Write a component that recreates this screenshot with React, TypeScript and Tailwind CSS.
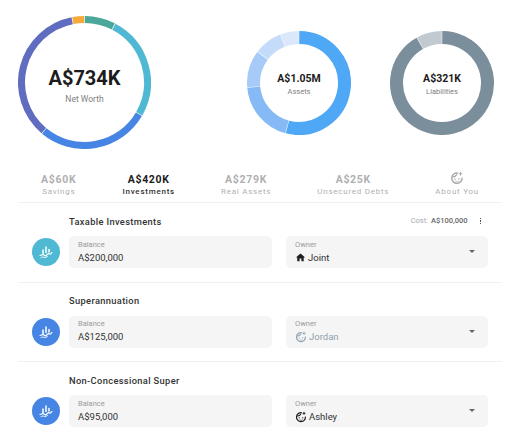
/* Net worth dashboard: rings, category tabs, account rows */
interface Segment {
  from: number;
  to: number;
  color: string;
}

const netWorth: Segment[] = [
  { from: 349, to: 360, color: "#f9a83a" },
  { from: 0, to: 27.5, color: "#4aa79a" },
  { from: 27.5, to: 120, color: "#4fb8d2" },
  { from: 120, to: 220, color: "#4685e4" },
  { from: 220, to: 349, color: "#5f6cc0" },
];

const assets: Segment[] = [
  { from: 0, to: 195, color: "#4fa8f5" },
  { from: 195, to: 265, color: "#85baf7" },
  { from: 265, to: 307, color: "#a7cbf9" },
  { from: 307, to: 339, color: "#c4dbfa" },
  { from: 339, to: 360, color: "#dbe7fb" },
];

const liabilities: Segment[] = [
  { from: 0, to: 331, color: "#7b8e9b" },
  { from: 331, to: 360, color: "#c1cad1" },
];

const tabs = [
  { value: "A$60K", label: "Savings" },
  { value: "A$420K", label: "Investments", active: true },
  { value: "A$279K", label: "Real Assets" },
  { value: "A$25K", label: "Unsecured Debts" },
  { label: "About You" },
];

function arc(cx: number, cy: number, r: number, from: number, to: number) {
  const rad = (a: number) => ((a - 90) * Math.PI) / 180;
  const x1 = cx + r * Math.cos(rad(from));
  const y1 = cy + r * Math.sin(rad(from));
  const x2 = cx + r * Math.cos(rad(to));
  const y2 = cy + r * Math.sin(rad(to));
  return `M${x1} ${y1}A${r} ${r} 0 ${to - from > 180 ? 1 : 0} 1 ${x2} ${y2}`;
}

function Ring({
  size,
  stroke,
  segments,
  children,
}: {
  size: number;
  stroke: number;
  segments: Segment[];
  children: React.ReactNode;
}) {
  const c = size / 2;
  return (
    <div className="relative shrink-0" style={{ width: size, height: size }}>
      <svg width={size} height={size}>
        {segments.map(s => (
          <path
            key={s.from}
            d={arc(c, c, c - stroke / 2, s.from + 0.3, s.to - 0.3)}
            fill="none"
            stroke={s.color}
            strokeWidth={stroke}
          />
        ))}
      </svg>
      <div className="absolute inset-0 flex flex-col items-center justify-center">
        {children}
      </div>
    </div>
  );
}

function ChartIcon() {
  return (
    <svg width="16" height="16" viewBox="0 0 16 16" fill="none" stroke="#fff">
      <path d="M5 6v4M8 3v5.5M11 5.5v2.5" strokeWidth="1.5" strokeLinecap="round" />
      <path d="M2 11.5l3-1 2.5 1.5 3-2.5 1.5.8 2-1.8" strokeWidth="1.1" strokeLinecap="round" strokeLinejoin="round" />
      <path d="M3 13.6l2-.7 2 .9 2.5-1.3" strokeWidth="0.8" strokeLinecap="round" />
    </svg>
  );
}

function FaceIcon({ color, size = 14 }: { color: string; size?: number }) {
  return (
    <svg width={size} height={size} viewBox="0 0 14 14" fill="none">
      <path d="M8 2.1A5.2 5.2 0 1 0 12.1 6.5" stroke={color} strokeWidth="1.4" />
      <path d="M2.2 5.8C4 6.1 6 5 7 3.2" stroke={color} strokeWidth="1.3" />
      <circle cx="5" cy="8" r="0.8" fill={color} />
      <circle cx="9" cy="8" r="0.8" fill={color} />
      <path d="M5.4 10.2c.9.8 2.3.8 3.2 0" stroke={color} strokeWidth="0.8" />
      <path d="M10.5 1v3.4M8.8 2.7h3.4" stroke={color} strokeWidth="1.1" />
    </svg>
  );
}

function HomeIcon() {
  return (
    <svg width="11" height="11" viewBox="0 0 24 24" fill="#1f1f1f">
      <path d="M10 20v-6h4v6h5v-8h3L12 3 2 12h3v8z" />
    </svg>
  );
}

function Field({
  label,
  children,
  caret,
  width,
}: {
  label: string;
  children: React.ReactNode;
  caret?: boolean;
  width: string;
}) {
  return (
    <div className={`${width} h-[32px] rounded-[5px] bg-[#f5f5f5] pl-[9px] pr-[13px] flex items-center justify-between`}>
      <div>
        <div className="text-[7.5px] leading-[10px] text-[#9a9a9a]">{label}</div>
        <div className="text-[9.5px] leading-[14px] mt-[1px] flex items-center gap-[2px] text-[#333333]">
          {children}
        </div>
      </div>
      {caret && (
        <div className="w-0 h-0 -mt-[1px] border-x-[3px] border-x-transparent border-t-[3px] border-t-[#666666]" />
      )}
    </div>
  );
}

function Row({
  title,
  color,
  balance,
  owner,
  meta,
  divider,
}: {
  title: string;
  color: string;
  balance: string;
  owner: React.ReactNode;
  meta?: boolean;
  divider?: boolean;
}) {
  return (
    <div className={`h-[79.5px] pt-[11px] ${divider ? "border-b border-[#f0f0f0]" : ""}`}>
      <div className="flex items-center justify-between pl-[51px] pr-[21px] h-[14px]">
        <div className="text-[9.3px] font-medium tracking-[0.35px] text-[#333333] pt-[1px]">{title}</div>
        {meta && (
          <div className="flex items-center text-[7.5px]">
            <span className="text-[#ababab]">Cost:</span>
            <span className="ml-[3px] font-medium text-[#666666]">A$100,000</span>
            <div className="ml-[12px] flex flex-col gap-[1px]">
              <span className="w-[1.5px] h-[1.5px] bg-[#555555]" />
              <span className="w-[1.5px] h-[1.5px] bg-[#555555]" />
              <span className="w-[1.5px] h-[1.5px] bg-[#555555]" />
            </div>
          </div>
        )}
      </div>
      <div className="flex items-center mt-[8px]">
        <div
          className="ml-[14px] w-[28px] h-[28px] rounded-full flex items-center justify-center"
          style={{ background: color }}
        >
          <ChartIcon />
        </div>
        <Field label="Balance" width="ml-[9px] w-[203px]">
          {balance}
        </Field>
        <Field label="Owner" caret width="ml-[14px] w-[202px]">
          {owner}
        </Field>
      </div>
    </div>
  );
}

export default function App() {
  return (
    <div className="w-[512px] h-[448px] overflow-hidden bg-white font-['Roboto',sans-serif]">
      <div className="flex items-center pt-[16px] pl-[18px]">
        <Ring size={133} stroke={7} segments={netWorth}>
          <div className="pt-[6px] flex flex-col items-center">
            <div className="text-[20px] leading-[24px] font-bold text-[#1c1c1c]">A$734K</div>
            <div className="text-[8.5px] leading-[11px] mt-[4px] text-[#808080]">Net Worth</div>
          </div>
        </Ring>
        <div className="ml-[96px]">
          <Ring size={104} stroke={13} segments={assets}>
            <div className="pt-[3px] flex flex-col items-center">
              <div className="text-[10.5px] leading-[13px] font-bold text-[#1c1c1c]">A$1.05M</div>
              <div className="text-[7.5px] leading-[10px] mt-[2px] text-[#808080]">Assets</div>
            </div>
          </Ring>
        </div>
        <div className="ml-[39px]">
          <Ring size={104} stroke={13} segments={liabilities}>
            <div className="pt-[3px] flex flex-col items-center">
              <div className="text-[10.5px] leading-[13px] font-bold text-[#1c1c1c]">A$321K</div>
              <div className="text-[7.5px] leading-[10px] mt-[2px] text-[#808080]">Liabilities</div>
            </div>
          </Ring>
        </div>
      </div>

      <div className="mx-[18px] mt-[23px] w-[484px] h-[31px] flex justify-around border-b border-[#f0f0f0]">
        {tabs.map(t => (
          <div key={t.label} className="flex flex-col items-center pt-[1px]">
            {t.value ? (
              <div className={`text-[10.5px] leading-[13px] font-bold tracking-[0.7px] ${t.active ? "text-[#1c1c1c]" : "text-[#b0b0b0]"}`}>
                {t.value}
              </div>
            ) : (
              <div className="h-[13px] -mt-[2px] mb-[2px]">
                <FaceIcon color="#a8a8a8" />
              </div>
            )}
            <div className={`text-[8px] leading-[11px] tracking-[0.75px] ${t.active ? "font-medium text-[#333333]" : "text-[#b0b0b0]"}`}>
              {t.label}
            </div>
          </div>
        ))}
      </div>

      <div className="mx-[18px] w-[484px]">
        <Row
          title="Taxable Investments"
          color="#4fb8d2"
          balance="A$200,000"
          meta
          divider
          owner={
            <>
              <HomeIcon />
              <span>Joint</span>
            </>
          }
        />
        <Row
          title="Superannuation"
          color="#4685e4"
          balance="A$125,000"
          divider
          owner={
            <>
              <FaceIcon color="#8fa5b5" size={12} />
              <span className="text-[#8fa1ae]">Jordan</span>
            </>
          }
        />
        <Row
          title="Non-Concessional Super"
          color="#4685e4"
          balance="A$95,000"
          owner={
            <>
              <FaceIcon color="#1f1f1f" size={12} />
              <span>Ashley</span>
            </>
          }
        />
      </div>
    </div>
  );
}
